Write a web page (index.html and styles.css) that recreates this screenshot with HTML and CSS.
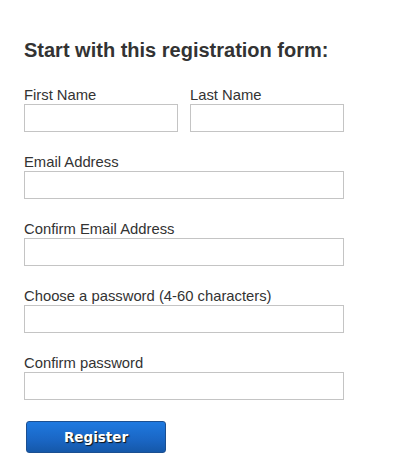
FILE: index.html
```
<!DOCTYPE html>
<html lang="en">
<head>
    <meta charset="UTF-8">
    <meta name="viewport" content="width=device-width, initial-scale=1.0">
    <title>Registration</title>
    <link rel="stylesheet" href="styles.css">
</head>
<body>
    <form class="register-form">
        <h2>Start with this registration form:</h2>

        <div class="name-row">
            <div class="field">
                <label for="firstName">First Name</label>
                <input type="text" id="firstName" class="half">
            </div>
            <div class="field">
                <label for="lastName">Last Name</label>
                <input type="text" id="lastName" class="half">
            </div>
        </div>

        <div class="field">
            <label for="email">Email Address</label>
            <input type="text" id="email">
        </div>

        <div class="field">
            <label for="confirmEmail">Confirm Email Address</label>
            <input type="text" id="confirmEmail">
        </div>

        <div class="field">
            <label for="password">Choose a password (4-60 characters)</label>
            <input type="password" id="password">
        </div>

        <div class="field">
            <label for="confirmPassword">Confirm password</label>
            <input type="password" id="confirmPassword">
        </div>

        <button type="button" class="register-btn">Register</button>
    </form>
</body>
</html>
```

FILE: styles.css
```
* {
    margin: 0;
    padding: 0;
    box-sizing: border-box;
}

body {
    background-color: #fff;
    font-family: 'Liberation Sans', Arial, sans-serif;
    color: #333;
}

.register-form {
    padding: 38px 0 0 24px;
    width: 344px;
}

h2 {
    font-size: 20px;
    font-weight: bold;
    color: #333;
    line-height: 24px;
    margin-bottom: 24px;
}

.name-row {
    display: flex;
    gap: 12px;
}

.field {
    margin-bottom: 21px;
}

label {
    display: block;
    font-size: 14.8px;
    line-height: 18px;
    color: #333;
}

input {
    display: block;
    width: 320px;
    height: 28px;
    border: 1px solid #c4c4c4;
    background-color: #fff;
    padding: 3px 5px;
    font-size: 14px;
}

input.half {
    width: 154px;
}

.register-btn {
    display: block;
    width: 140px;
    height: 32px;
    margin: 1px 0 0 2px;
    border: 1px solid #1b4f91;
    border-radius: 3px;
    background: linear-gradient(to bottom, #1e79e0 0%, #1a66c4 60%, #1558a9 100%);
    color: #fff;
    font-family: 'DejaVu Sans', Verdana, sans-serif;
    font-size: 13.5px;
    font-weight: bold;
    text-shadow: 1px 1px 1px #111;
    cursor: pointer;
}
```
